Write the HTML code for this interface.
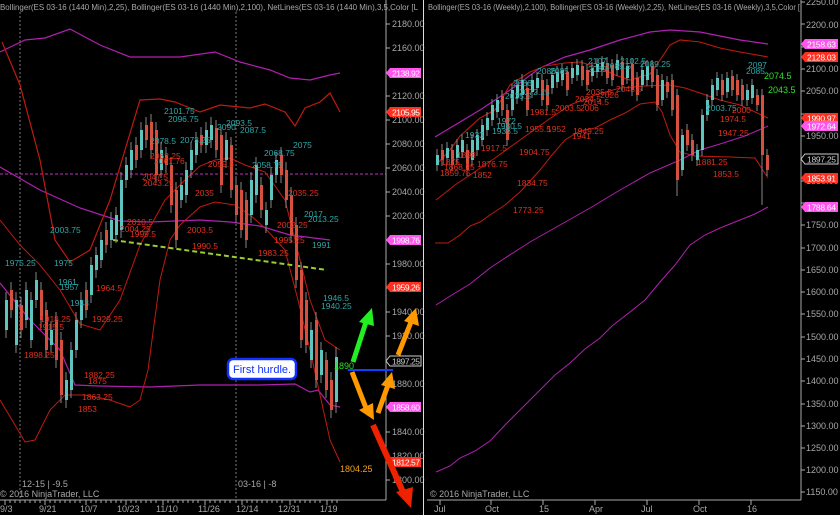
<!DOCTYPE html>
<html><head><meta charset="utf-8"><style>
html,body{margin:0;padding:0;background:#000;width:840px;height:515px;overflow:hidden}
svg{display:block}
text{font-family:"Liberation Sans",Arial,sans-serif}
.ax{fill:#a8a8a8;font-size:9px}
.hd{fill:#a8a8a8;font-size:8.5px}
.cy{fill:#2fa6a6;font-size:8.5px}
.rd{fill:#e0301e;font-size:8.5px}
.tg text{font-size:8.5px;fill:#fff}
</style></head><body>
<svg width="840" height="515" viewBox="0 0 840 515" xmlns="http://www.w3.org/2000/svg">
<rect width="840" height="515" fill="#000"/>
<!-- LEFT PANEL -->
<g>
<line x1="20" y1="12" x2="20" y2="500" stroke="#777" stroke-dasharray="2,2"/>
<line x1="236" y1="12" x2="236" y2="500" stroke="#777" stroke-dasharray="2,2"/>
<line x1="0" y1="174" x2="386" y2="174" stroke="#c030c0" stroke-dasharray="3,2"/>
<polyline fill="none" stroke="#b020b0" stroke-width="1.2" points="0,52 25,40 45,38 70,29 100,45 130,57 180,57 215,52 240,62 270,70 290,78 310,80 330,75 340,73"/>
<polyline fill="none" stroke="#b020b0" stroke-width="1.2" points="0,167 40,190 80,208 120,221 150,222 200,220 230,222 260,226 290,235 330,240"/>
<polyline fill="none" stroke="#b020b0" stroke-width="1.2" points="0,283 30,320 60,350 75,385 100,386 150,387 200,385 260,385 295,384 310,392 318,390 330,405 340,407"/>
<polyline fill="none" stroke="#c01a10" stroke-width="1.2" points="2,42 20,85 40,160 55,240 70,262 90,250 110,200 125,150 140,100 160,99 175,102 190,108 200,112 220,105 250,108 265,104 285,112 295,126 305,108 320,102 330,93 340,112"/>
<polyline fill="none" stroke="#c01a10" stroke-width="1" points="0,220 20,245 40,265 60,290 80,324 100,330 120,300 140,245 165,200 185,180 200,166 215,160 230,158 245,165 265,172 285,200 300,260 310,300 325,340 340,350"/>
<polyline fill="none" stroke="#c01a10" stroke-width="1" points="0,400 12,420 25,442 35,440 50,410 65,395 85,395 110,400 130,407 140,400 148,370 160,280 170,240 180,225 200,207 215,202 235,205 250,215 265,228 285,250 298,300 310,350 320,395 330,440 340,462"/>
<line x1="113" y1="240" x2="327" y2="270" stroke="#9acd32" stroke-width="2" stroke-dasharray="5,3"/>
<path fill="none" stroke="#888" stroke-width="1" d="M6,292V338M11,282V318M16,292V353M21,297V338M26,282V328M31,292V348M36,272V308M41,282V328M46,302V358M51,322V353M56,312V368M61,332V403M66,372V408M71,342V398M76,312V358M81,292V328M86,282V318M91,257V303M96,247V278M101,232V268M106,222V253M111,212V248M116,207V243M121,172V238M126,157V188M131,142V178M136,137V168M141,122V158M146,117V148M151,114V158M156,122V183M161,142V178M166,147V173M171,157V213M176,182V248M181,177V208M186,162V203M191,142V178M196,132V163M201,127V153M206,122V153M211,117V148M216,120V158M221,127V193M226,132V168M231,137V198M236,177V223M241,182V238M246,192V248M251,172V223M256,157V203M261,177V218M266,202V233M271,167V208M276,152V183M281,147V183M286,162V208M291,187V243M296,217V288M301,262V348M306,292V353M311,322V368M316,312V388M321,342V383M326,352V398M331,372V418M336,347V413"/>
<g fill="#5ec4bd">
<rect x="5" y="300" width="3" height="30"/><rect x="15" y="300" width="3" height="45"/><rect x="25" y="290" width="3" height="30"/><rect x="30" y="300" width="3" height="40"/><rect x="35" y="280" width="3" height="20"/><rect x="50" y="330" width="3" height="15"/><rect x="65" y="380" width="3" height="20"/><rect x="70" y="350" width="3" height="40"/><rect x="75" y="320" width="3" height="30"/><rect x="80" y="300" width="3" height="20"/><rect x="90" y="265" width="3" height="30"/><rect x="95" y="255" width="3" height="15"/><rect x="100" y="240" width="3" height="20"/><rect x="110" y="220" width="3" height="20"/><rect x="115" y="215" width="3" height="20"/><rect x="120" y="180" width="3" height="50"/><rect x="125" y="165" width="3" height="15"/><rect x="130" y="150" width="3" height="20"/><rect x="140" y="130" width="3" height="20"/><rect x="160" y="150" width="3" height="20"/><rect x="180" y="185" width="3" height="15"/><rect x="185" y="170" width="3" height="25"/><rect x="190" y="150" width="3" height="20"/><rect x="195" y="140" width="3" height="15"/><rect x="205" y="130" width="3" height="15"/><rect x="210" y="125" width="3" height="15"/><rect x="225" y="140" width="3" height="20"/><rect x="250" y="180" width="3" height="35"/><rect x="255" y="165" width="3" height="30"/><rect x="265" y="210" width="3" height="15"/><rect x="270" y="175" width="3" height="25"/><rect x="275" y="160" width="3" height="15"/><rect x="310" y="330" width="3" height="30"/><rect x="320" y="350" width="3" height="25"/><rect x="335" y="357" width="3" height="45"/>
</g>
<g fill="#d5503f">
<rect x="10" y="290" width="3" height="20"/><rect x="20" y="305" width="3" height="25"/><rect x="40" y="290" width="3" height="30"/><rect x="45" y="310" width="3" height="40"/><rect x="55" y="320" width="3" height="40"/><rect x="60" y="340" width="3" height="55"/><rect x="85" y="290" width="3" height="20"/><rect x="105" y="230" width="3" height="15"/><rect x="135" y="145" width="3" height="15"/><rect x="145" y="125" width="3" height="15"/><rect x="150" y="122" width="3" height="28"/><rect x="155" y="130" width="3" height="45"/><rect x="165" y="155" width="3" height="10"/><rect x="170" y="165" width="3" height="40"/><rect x="175" y="190" width="3" height="50"/><rect x="200" y="135" width="3" height="10"/><rect x="215" y="128" width="3" height="22"/><rect x="220" y="135" width="3" height="50"/><rect x="230" y="145" width="3" height="45"/><rect x="235" y="185" width="3" height="30"/><rect x="240" y="190" width="3" height="40"/><rect x="245" y="200" width="3" height="40"/><rect x="260" y="185" width="3" height="25"/><rect x="280" y="155" width="3" height="20"/><rect x="285" y="170" width="3" height="30"/><rect x="290" y="195" width="3" height="40"/><rect x="295" y="225" width="3" height="55"/><rect x="300" y="270" width="3" height="70"/><rect x="305" y="300" width="3" height="45"/><rect x="315" y="320" width="3" height="60"/><rect x="325" y="360" width="3" height="30"/><rect x="330" y="380" width="3" height="30"/>
</g>
<g class="cy">
<text x="164" y="114">2101.75</text><text x="168" y="122">2096.75</text><text x="226" y="126">2093.5</text><text x="217" y="130">2090</text><text x="240" y="133">2087.5</text><text x="150" y="144">2078.5</text><text x="180" y="143">2073.25</text><text x="264" y="156">2068.75</text><text x="293" y="148">2075</text><text x="252" y="168">2058.75</text><text x="50" y="233">2003.75</text><text x="304" y="217">2017</text><text x="308" y="222">2013.25</text><text x="312" y="248">1991</text><text x="5" y="266">1975.25</text><text x="54" y="266">1975</text><text x="58" y="285">1961</text><text x="60" y="290">1957</text><text x="70" y="306">1943</text><text x="323" y="301">1946.5</text><text x="321" y="309">1940.25</text>
</g>
<g class="rd">
<text x="150" y="159">2062.25</text><text x="154" y="164">2061.76</text><text x="142" y="180">2047.5</text><text x="143" y="186">2043.25</text><text x="208" y="167">2059.5</text><text x="195" y="196">2035</text><text x="288" y="196">2035.25</text><text x="127" y="225">2010.5</text><text x="120" y="232">2004.25</text><text x="130" y="237">1999.5</text><text x="187" y="233">2003.5</text><text x="192" y="249">1990.5</text><text x="277" y="228">2002.25</text><text x="274" y="243">1995.25</text><text x="258" y="256">1983.25</text><text x="96" y="291">1964.5</text><text x="92" y="322">1929.25</text><text x="40" y="322">1918.25</text><text x="38" y="330">1915.5</text><text x="24" y="358">1898.25</text><text x="84" y="378">1882.25</text><text x="88" y="384">1875</text><text x="82" y="400">1863.25</text><text x="78" y="412">1853</text>
</g>
<text x="340" y="472" fill="#f0a020" font-size="9">1804.25</text>
<text x="334" y="369" fill="#30e030" font-size="9">1890</text>
<text x="22" y="487" class="ax">12-15 | -9.5</text>
<text x="238" y="487" class="ax">03-16 | -8</text>
<text x="0" y="497" class="ax">© 2016 NinjaTrader, LLC</text>
<text x="0" y="10" class="hd" textLength="418" lengthAdjust="spacingAndGlyphs">Bollinger(ES 03-16 (1440 Min),2,25), Bollinger(ES 03-16 (1440 Min),2,100), NetLines(ES 03-16 (1440 Min),3,5,Color [L</text>
<rect x="386" y="12" width="37" height="503" fill="#000"/>
<line x1="386" y1="0" x2="386" y2="500" stroke="#aaa"/>
<line x1="0" y1="500" x2="386" y2="500" stroke="#aaa"/>
<path stroke="#aaa" d="M5,500V505M10,500V503M15,500V503M20,500V503M25,500V503M30,500V503M35,500V503M40,500V503M45,500V505M50,500V503M55,500V503M60,500V503M65,500V503M70,500V503M75,500V503M80,500V503M86,500V505M91,500V503M96,500V503M101,500V503M106,500V503M111,500V503M116,500V503M121,500V503M126,500V505M131,500V503M136,500V503M141,500V503M146,500V503M151,500V503M156,500V503M163,500V505M168,500V503M173,500V503M178,500V503M183,500V503M188,500V503M193,500V503M198,500V503M205,500V505M210,500V503M215,500V503M220,500V503M225,500V503M230,500V503M236,500V503M242,500V505M247,500V503M252,500V503M257,500V503M262,500V503M267,500V503M272,500V503M277,500V503M282,500V503M290,500V505M295,500V503M300,500V503M305,500V503M310,500V503M315,500V503M320,500V503M327,500V505M332,500V503M337,500V503"/>
<g class="ax"><text x="0" y="512">9/3</text><text x="39" y="512">9/21</text><text x="80" y="512">10/7</text><text x="117" y="512">10/23</text><text x="156" y="512">11/10</text><text x="198" y="512">11/26</text><text x="236" y="512">12/14</text><text x="278" y="512">12/31</text><text x="320" y="512">1/19</text></g>
<path stroke="#aaa" d="M386,24H390M386,48H390M386,72H390M386,96H390M386,120H390M386,144H390M386,168H390M386,192H390M386,216H390M386,240H390M386,264H390M386,288H390M386,312H390M386,336H390M386,360H390M386,384H390M386,408H390M386,432H390M386,456H390M386,480H390"/>
<g class="ax"><text x="392" y="27">2180.00</text><text x="392" y="51">2160.00</text><text x="392" y="99">2120.00</text><text x="392" y="123">2100.00</text><text x="392" y="147">2080.00</text><text x="392" y="171">2060.00</text><text x="392" y="195">2040.00</text><text x="392" y="219">2020.00</text><text x="392" y="267">1980.00</text><text x="392" y="315">1940.00</text><text x="392" y="339">1920.00</text><text x="392" y="387">1880.00</text><text x="392" y="435">1840.00</text><text x="392" y="459">1820.00</text><text x="392" y="483">1800.00</text></g>
<g class="tg">
<polygon points="386,73 390,68 421,68 421,78 390,78" fill="#ff55ee"/><text x="392" y="76.5" textLength="28">2138.92</text>
<polygon points="386,112 390,107 421,107 421,117 390,117" fill="#ff3020"/><text x="392" y="115.5" textLength="28">2105.95</text>
<polygon points="386,240 390,235 421,235 421,245 390,245" fill="#ff55ee"/><text x="392" y="243.5" textLength="28">1998.76</text>
<polygon points="386,287 390,282 421,282 421,292 390,292" fill="#ff3020"/><text x="392" y="290.5" textLength="28">1959.26</text>
<polygon points="386,361 390,356 421,356 421,366 390,366" fill="#000" stroke="#ccc"/><text x="392" y="364.5" style="fill:#ccc" textLength="28">1897.25</text>
<polygon points="386,407 390,402 421,402 421,412 390,412" fill="#ff55ee"/><text x="392" y="410.5" textLength="28">1858.60</text>
<polygon points="386,462 390,457 421,457 421,467 390,467" fill="#ff3020"/><text x="392" y="465.5" textLength="28">1812.57</text>
</g>
</g>
<line x1="423.5" y1="0" x2="423.5" y2="515" stroke="#ddd"/>
<!-- RIGHT PANEL -->
<g>
<polyline fill="none" stroke="#b020b0" stroke-width="1.2" points="435,137 460,122 480,110 510,90 540,68 565,57 590,50 620,40 650,32 670,30 700,32 720,36 740,40 768,44"/>
<polyline fill="none" stroke="#c01a10" stroke-width="1.1" points="436,165 450,150 460,136 480,118 495,110 510,85 530,72 545,66 565,63 580,62 600,68 615,75 630,80 650,74 660,60 670,45 680,40 700,42 720,48 740,52 768,57"/>
<polyline fill="none" stroke="#c01a10" stroke-width="1" points="436,200 455,185 470,175 495,158 520,140 545,122 570,105 595,95 620,88 645,86 670,85 685,88 700,93 720,100 740,105 768,118"/>
<polyline fill="none" stroke="#c01a10" stroke-width="1" points="435,243 448,243 460,235 470,226 480,222 490,215 505,205 520,192 540,170 552,155 565,140 580,131 595,128 610,120 625,113 640,104 655,102 662,112 670,135 680,152 695,156 730,157 755,158 768,178"/>
<polyline fill="none" stroke="#b020b0" stroke-width="1" points="436,305 455,293 470,284 490,268 502,260 530,242 560,225 590,208 620,190 650,173 680,160 700,150 720,144 745,136 768,126"/>
<polyline fill="none" stroke="#b020b0" stroke-width="1" points="436,472 450,466 460,458 475,451 490,441 505,425 520,410 540,390 555,375 570,363 585,349 600,338 612,326 630,312 645,300 660,282 675,265 690,245 705,235 720,228 740,220 755,214 768,207"/>
<path fill="none" stroke="#888" d="M437,149V171M442,144V166M447,142V164M452,144V171M457,139V164M462,134V158M467,144V176M472,134V166M477,129V156M482,119V146M487,112V136M492,99V126M497,94V118M502,90V116M507,104V146M512,84V116M517,79V104M522,74V101M527,82V116M532,74V98M537,72V94M542,74V106M547,79V111M552,69V94M557,66V88M562,64V86M567,66V96M572,62V84M577,59V81M582,60V86M587,64V91M592,62V82M597,58V78M602,56V76M607,57V84M612,59V86M617,54V76M622,56V91M627,60V84M632,58V96M637,72V101M642,64V91M647,60V86M652,60V88M657,69V111M662,74V106M667,76V98M672,74V116M677,89V196M682,129V176M687,124V151M692,134V161M697,144V166M702,109V156M707,94V121M712,79V106M717,72V96M722,74V101M727,72V98M732,70V96M737,74V101M742,79V106M747,84V106M752,79V104M757,89V111M762,89V205M767,149V176"/>
<g fill="#5ec4bd">
<rect x="436" y="155" width="3" height="10"/><rect x="446" y="148" width="3" height="10"/><rect x="456" y="145" width="3" height="13"/><rect x="461" y="140" width="3" height="12"/><rect x="471" y="140" width="3" height="20"/><rect x="476" y="135" width="3" height="15"/><rect x="481" y="125" width="3" height="15"/><rect x="486" y="118" width="3" height="12"/><rect x="491" y="105" width="3" height="15"/><rect x="496" y="100" width="3" height="12"/><rect x="511" y="90" width="3" height="20"/><rect x="516" y="85" width="3" height="13"/><rect x="521" y="80" width="3" height="15"/><rect x="531" y="80" width="3" height="12"/><rect x="536" y="78" width="3" height="10"/><rect x="551" y="75" width="3" height="13"/><rect x="556" y="72" width="3" height="10"/><rect x="561" y="70" width="3" height="10"/><rect x="571" y="68" width="3" height="10"/><rect x="576" y="65" width="3" height="10"/><rect x="591" y="68" width="3" height="8"/><rect x="596" y="64" width="3" height="8"/><rect x="601" y="62" width="3" height="8"/><rect x="616" y="60" width="3" height="10"/><rect x="626" y="66" width="3" height="12"/><rect x="641" y="70" width="3" height="15"/><rect x="646" y="66" width="3" height="14"/><rect x="661" y="80" width="3" height="20"/><rect x="681" y="135" width="3" height="35"/><rect x="696" y="150" width="3" height="10"/><rect x="701" y="115" width="3" height="35"/><rect x="706" y="100" width="3" height="15"/><rect x="711" y="85" width="3" height="15"/><rect x="716" y="78" width="3" height="12"/><rect x="726" y="78" width="3" height="14"/><rect x="746" y="90" width="3" height="10"/><rect x="751" y="85" width="3" height="13"/>
</g>
<g fill="#d5503f">
<rect x="441" y="150" width="3" height="10"/><rect x="451" y="150" width="3" height="15"/><rect x="466" y="150" width="3" height="20"/><rect x="501" y="96" width="3" height="14"/><rect x="506" y="110" width="3" height="30"/><rect x="526" y="88" width="3" height="22"/><rect x="541" y="80" width="3" height="20"/><rect x="546" y="85" width="3" height="20"/><rect x="566" y="72" width="3" height="18"/><rect x="581" y="66" width="3" height="14"/><rect x="586" y="70" width="3" height="15"/><rect x="606" y="63" width="3" height="15"/><rect x="611" y="65" width="3" height="15"/><rect x="621" y="62" width="3" height="23"/><rect x="631" y="64" width="3" height="26"/><rect x="636" y="78" width="3" height="17"/><rect x="651" y="66" width="3" height="16"/><rect x="656" y="75" width="3" height="30"/><rect x="666" y="82" width="3" height="10"/><rect x="671" y="80" width="3" height="30"/><rect x="676" y="95" width="3" height="85"/><rect x="686" y="130" width="3" height="15"/><rect x="691" y="140" width="3" height="15"/><rect x="721" y="80" width="3" height="15"/><rect x="731" y="76" width="3" height="14"/><rect x="736" y="80" width="3" height="15"/><rect x="741" y="85" width="3" height="15"/><rect x="756" y="95" width="3" height="10"/><rect x="761" y="95" width="3" height="60"/><rect x="766" y="155" width="3" height="15"/>
</g>
<g class="cy">
<text x="588" y="64">2107</text><text x="605" y="69">2089.5</text><text x="620" y="64">2102.5</text><text x="640" y="67">2089.25</text><text x="588" y="72">2089</text><text x="537" y="74">2086</text><text x="550" y="74">2085</text><text x="513" y="86">2086</text><text x="519" y="95">2072.25</text><text x="505" y="99">2035.5</text><text x="496" y="129">1980.5</text><text x="497" y="124">1972</text><text x="492" y="134">1938.5</text><text x="465" y="138">1933</text><text x="748" y="68">2097</text><text x="746" y="74">2085</text><text x="706" y="111">2003.75</text>
</g>
<g class="rd">
<text x="586" y="95">2035.5</text><text x="600" y="98">2026</text><text x="616" y="92">2043.5</text><text x="575" y="102">2024.5</text><text x="583" y="105">2014.5</text><text x="580" y="111">2006</text><text x="555" y="111">2003.5</text><text x="530" y="115">1981.5</text><text x="525" y="132">1955.5</text><text x="547" y="132">1952</text><text x="573" y="134">1949.25</text><text x="572" y="139">1941</text><text x="481" y="151">1917.5</text><text x="519" y="155">1904.75</text><text x="457" y="158">1898</text><text x="441" y="165">1875</text><text x="444" y="170">1868.25</text><text x="440" y="176">1859.75</text><text x="477" y="167">1876.75</text><text x="473" y="178">1852</text><text x="517" y="186">1834.75</text><text x="513" y="213">1773.25</text><text x="720" y="122">1974.5</text><text x="718" y="136">1947.25</text><text x="697" y="165">1881.25</text><text x="713" y="177">1853.5</text><text x="732" y="113">2000</text>
</g>
<text x="764" y="79" fill="#30e030" font-size="9">2074.5</text>
<text x="768" y="93" fill="#30e030" font-size="9">2043.5</text>
<text x="430" y="497" class="ax">© 2016 NinjaTrader, LLC</text>
<rect x="424" y="0" width="416" height="12" fill="#000"/>
<text x="428" y="10" class="hd" textLength="372" lengthAdjust="spacingAndGlyphs">Bollinger(ES 03-16 (Weekly),2,100), Bollinger(ES 03-16 (Weekly),2,25), NetLines(ES 03-16 (Weekly),3,5,Color [</text>
<rect x="801" y="12" width="39" height="503" fill="#000"/>
<line x1="801" y1="0" x2="801" y2="500" stroke="#aaa"/>
<line x1="427" y1="500" x2="801" y2="500" stroke="#aaa"/>
<path stroke="#aaa" d="M440,500V505M491,500V505M543,500V505M595,500V505M647,500V505M699,500V505M751,500V505M801,2H805M801,24H805M801,47H805M801,69H805M801,91H805M801,114H805M801,136H805M801,158H805M801,181H805M801,203H805M801,225H805M801,248H805M801,270H805M801,292H805M801,314H805M801,337H805M801,359H805M801,381H805M801,404H805M801,426H805M801,448H805M801,470H805M801,492H805"/>
<g class="ax"><text x="434" y="512">Jul</text><text x="485" y="512">Oct</text><text x="539" y="512">15</text><text x="589" y="512">Apr</text><text x="641" y="512">Jul</text><text x="693" y="512">Oct</text><text x="747" y="512">16</text></g>
<g class="ax"><text x="806" y="5">2250.00</text><text x="806" y="28">2200.00</text><text x="806" y="72">2100.00</text><text x="806" y="94">2050.00</text><text x="806" y="139">1950.00</text><text x="806" y="184">1850.00</text><text x="806" y="228">1750.00</text><text x="806" y="251">1700.00</text><text x="806" y="273">1650.00</text><text x="806" y="295">1600.00</text><text x="806" y="317">1550.00</text><text x="806" y="340">1500.00</text><text x="806" y="362">1450.00</text><text x="806" y="384">1400.00</text><text x="806" y="407">1350.00</text><text x="806" y="429">1300.00</text><text x="806" y="451">1250.00</text><text x="806" y="473">1200.00</text><text x="806" y="495">1150.00</text></g>
<g class="tg">
<polygon points="801,44 805,39 838,39 838,49 805,49" fill="#ff55ee"/><text x="807" y="47.5" textLength="29">2158.63</text>
<polygon points="801,57 805,52 838,52 838,62 805,62" fill="#ff3020"/><text x="807" y="60.5" textLength="29">2128.03</text>
<polygon points="801,118 805,113 838,113 838,123 805,123" fill="#ff3020"/><text x="807" y="121.5" textLength="29">1990.97</text>
<polygon points="801,126 805,121 838,121 838,131 805,131" fill="#ff55ee"/><text x="807" y="129.5" textLength="29">1972.64</text>
<polygon points="801,159 805,154 838,154 838,164 805,164" fill="#000" stroke="#ccc"/><text x="807" y="162.5" style="fill:#ccc" textLength="29">1897.25</text>
<polygon points="801,178 805,173 838,173 838,183 805,183" fill="#ff3020"/><text x="807" y="181.5" textLength="29">1853.91</text>
<polygon points="801,207 805,202 838,202 838,212 805,212" fill="#ff55ee"/><text x="807" y="210.5" textLength="29">1788.64</text>
</g>
</g>
<line x1="348" y1="370" x2="393" y2="370" stroke="#1040ff" stroke-width="2"/>
<line x1="352" y1="372" x2="366" y2="408" stroke="#ff9900" stroke-width="5"/>
<polygon points="359,410 374,420 373,403" fill="#ff9900"/>
<line x1="353" y1="362" x2="366" y2="322" stroke="#22ee22" stroke-width="5"/>
<polygon points="359,322 372,308 374,326" fill="#22ee22"/>
<line x1="378" y1="413" x2="388" y2="385" stroke="#ff9900" stroke-width="5"/>
<polygon points="381,385 392,372 395,389" fill="#ff9900"/>
<line x1="398" y1="355" x2="411" y2="322" stroke="#ff9900" stroke-width="5"/>
<polygon points="404,321 416,308 419,326" fill="#ff9900"/>
<line x1="373" y1="425" x2="403" y2="492" stroke="#ee2200" stroke-width="6"/>
<polygon points="396,492 411,508 413,487" fill="#ee2200"/>
<rect x="228" y="359" width="68" height="20" rx="5" fill="#fff" stroke="#1030ff" stroke-width="2.5"/>
<text x="233" y="373" fill="#1030ff" font-size="11">First hurdle.</text>
</svg>
</body></html>
